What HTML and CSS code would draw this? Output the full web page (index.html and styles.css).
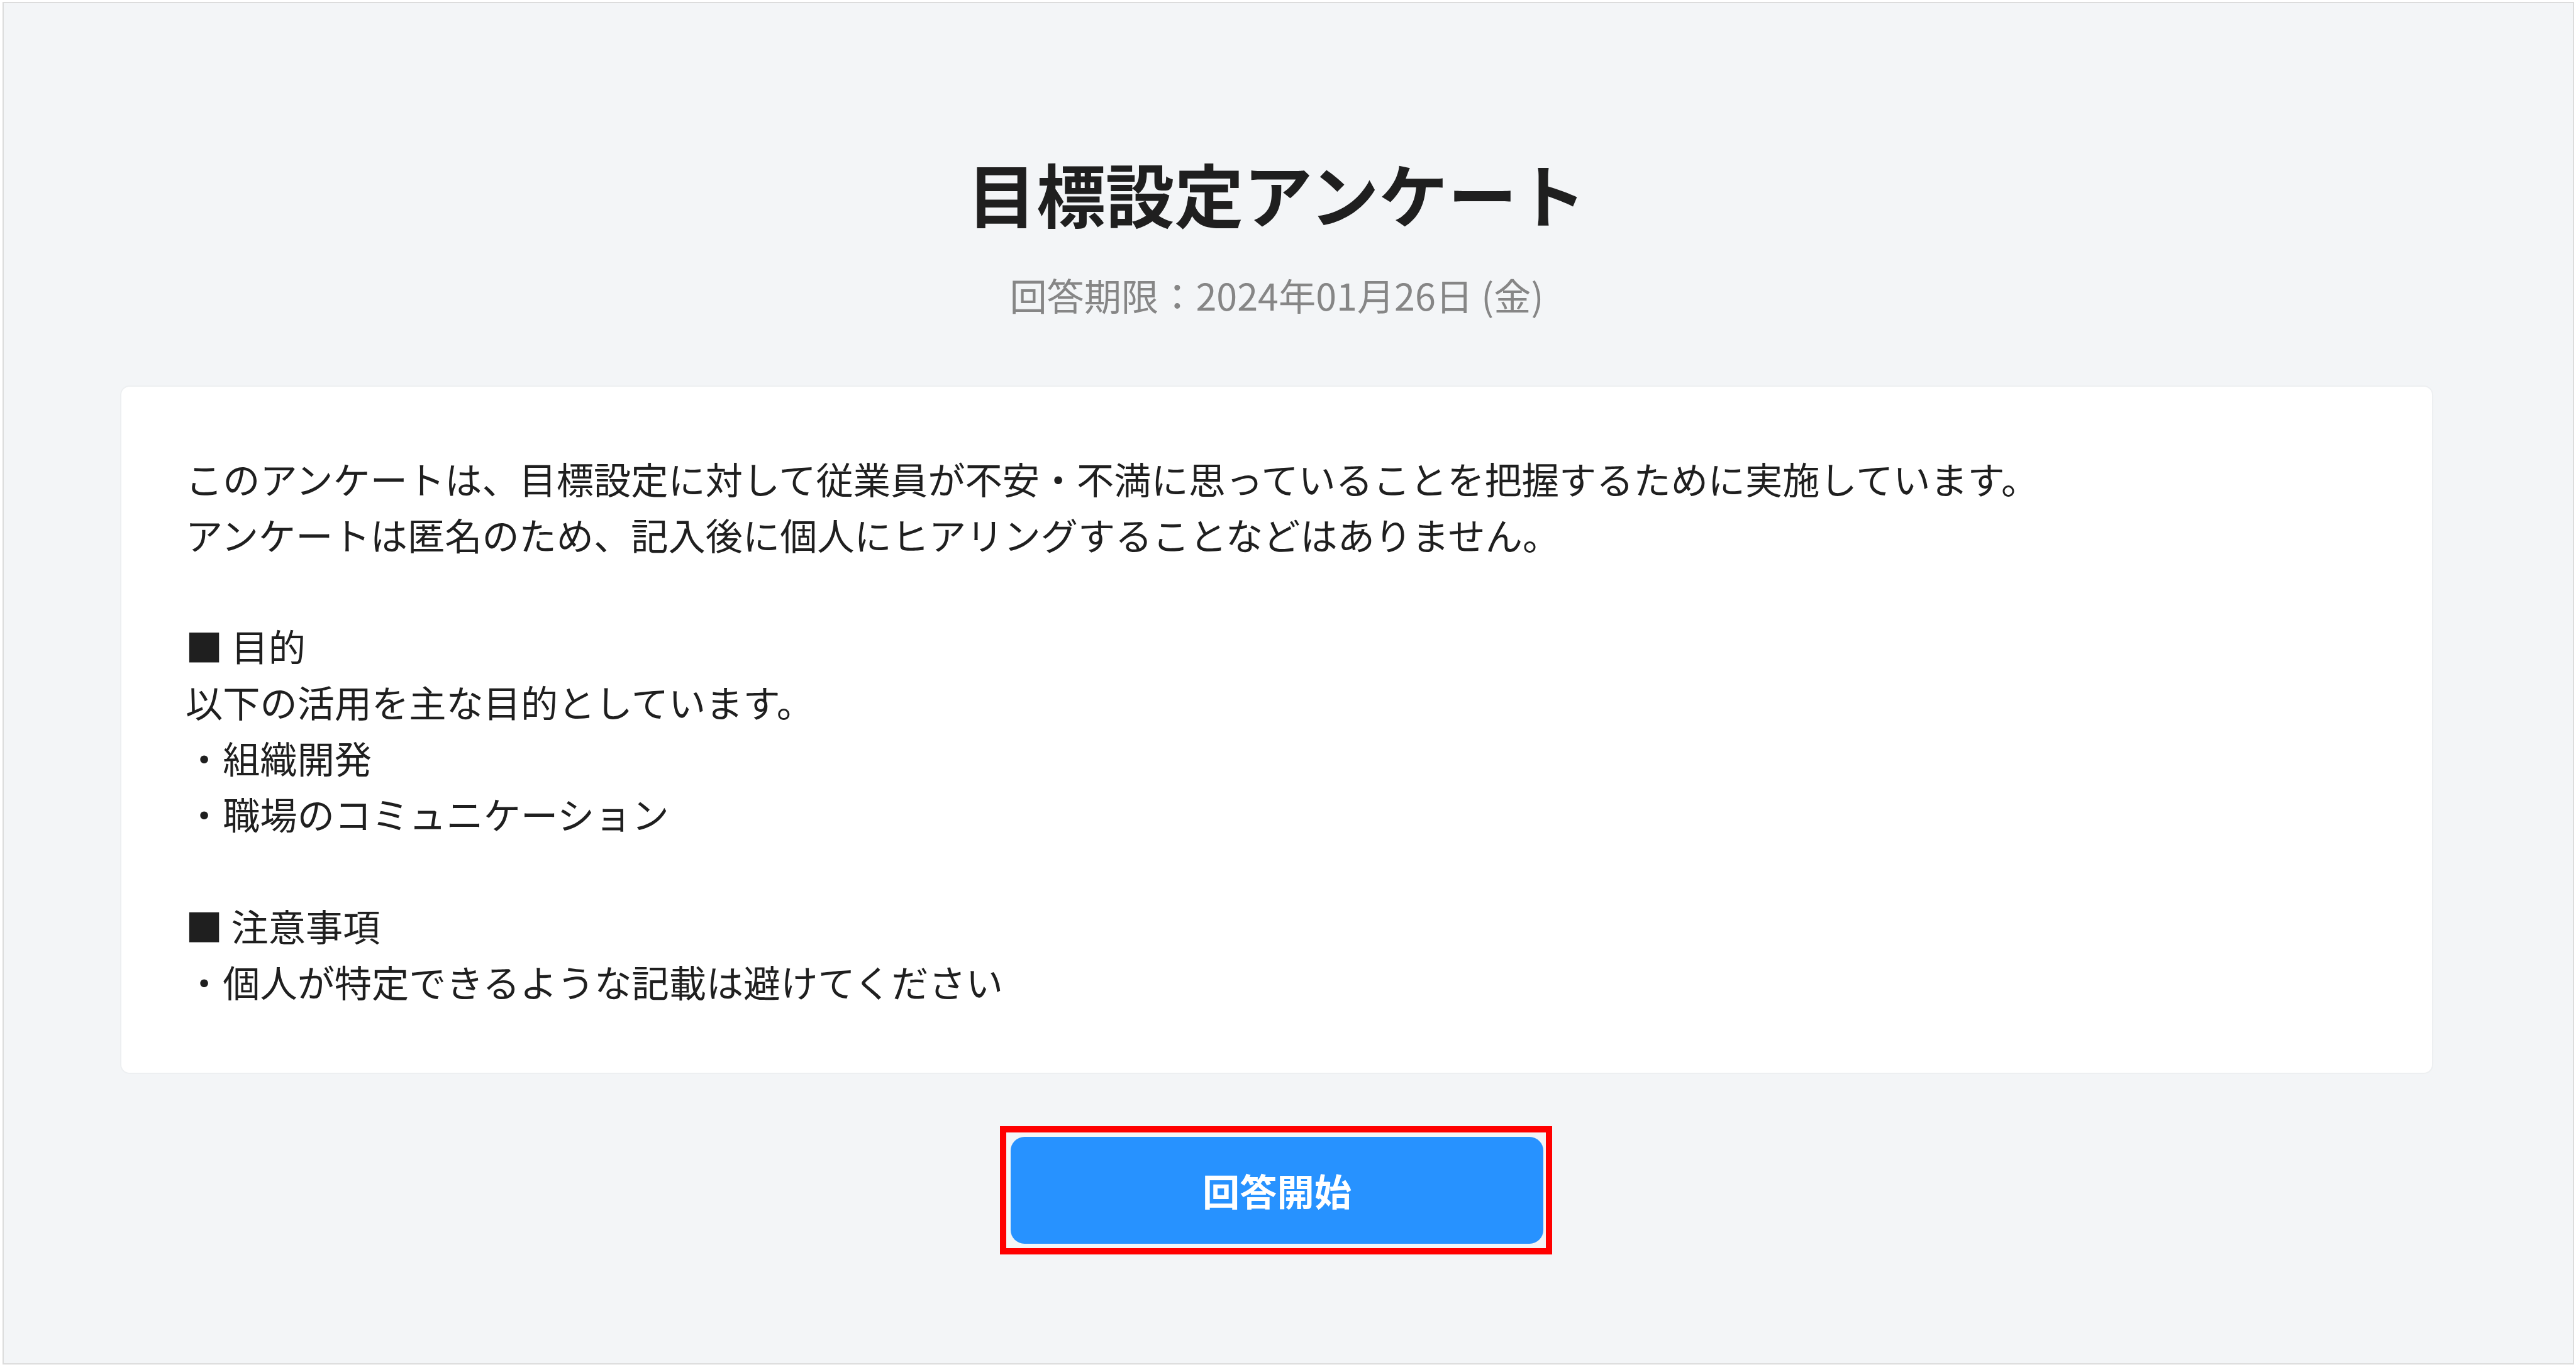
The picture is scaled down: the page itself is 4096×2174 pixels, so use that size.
FILE: index.html
```
<!DOCTYPE html>
<html lang="ja">
<head>
  <meta charset="UTF-8" />
  <title>目標設定アンケート</title>
  <link rel="stylesheet" href="styles.css">
</head>
<body>
<main class="page">
  <h1 class="title">目標設定アンケート</h1>
  <p class="deadline">回答期限：2024年01月26日 (金)</p>
  <div class="card">このアンケートは、目標設定に対して従業員が不安・不満に思っていることを把握するために実施しています。
アンケートは匿名のため、記入後に個人にヒアリングすることなどはありません。

■ 目的
以下の活用を主な目的としています。
・組織開発
・職場のコミュニケーション

■ 注意事項
・個人が特定できるような記載は避けてください</div>
  <div class="highlight">
    <button class="start-button">回答開始</button>
  </div>
</main>
</body>
</html>
```
FILE: styles.css
```
* {
  box-sizing: border-box;
}
body {
  margin: 0;
  padding: 3px 3px 4px 4px;
  height: 2174px;
  background-color: #fff;
  color: #1f1f1f;
  font-family: "Noto Sans CJK JP", sans-serif;
  font-size: 59.22px;
  line-height: 88.86px;
}
.page {
  display: flex;
  flex-direction: column;
  height: 100%;
  padding: 218px 222px 0 185px;
  border: 2px solid #dcdcdc;
  background-color: #f3f5f7;
}
.title {
  margin: 0;
  font-size: 109.8px;
  line-height: 167px;
  text-align: center;
}
.deadline {
  margin: 34px 0 100px;
  color: #868686;
  text-align: center;
}
.card {
  height: 1095px;
  padding: 101px 102px;
  border: 2px solid #edeff1;
  border-radius: 15px;
  background-color: #fff;
  white-space: pre-wrap;
}
.highlight {
  display: flex;
  align-self: center;
  width: 878px;
  height: 204px;
  margin: 83px 2px 0 0;
  padding: 7px 4px 7px 7px;
  border: 10px solid #f00;
}
.start-button {
  flex: 1;
  padding: 0;
  border: none;
  border-radius: 22px;
  background-color: #2792ff;
  color: #fff;
  font: inherit;
  font-weight: bold;
}
```
